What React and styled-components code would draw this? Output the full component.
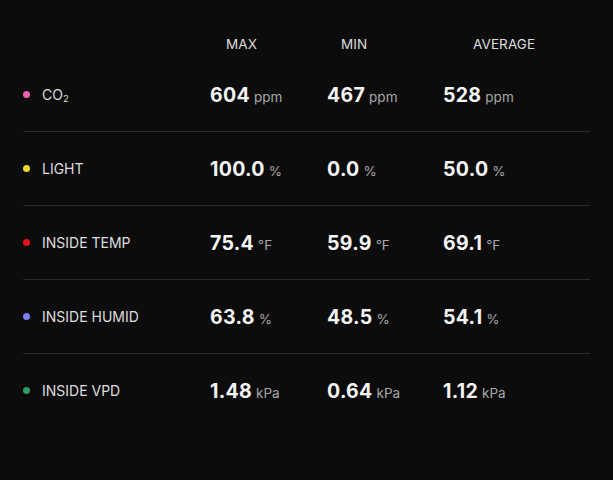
import React from "react";
import styled, { createGlobalStyle } from "styled-components";

const Global = createGlobalStyle`
  html, body { margin: 0; padding: 0; background: #0c0c0c; }
  body { font-family: Inter, "Noto Sans", "Liberation Sans", sans-serif; }
`;

const Page = styled.div`
  width: 613px;
  height: 480px;
  box-sizing: border-box;
  padding: 30px 23px 0 23px;
  background: #0c0c0c;
`;

const Grid = styled.div`
  display: grid;
  grid-template-columns: 187px 117px 116px 1fr;
`;

const HeaderCell = styled.div`
  height: 28px;
  display: flex;
  align-items: center;
  padding-left: ${(p) => p.$offset || 0}px;
  color: #dcdcdc;
  font-size: 13.5px;
  font-weight: 400;
  letter-spacing: 0.1px;
`;

const Row = styled.div`
  grid-column: 1 / -1;
  display: grid;
  grid-template-columns: subgrid;
  height: 73px;
  align-items: center;
  border-bottom: ${(p) => (p.$last ? "none" : "1px solid #2a2a2a")};
`;

const Label = styled.div`
  display: flex;
  align-items: center;
  gap: 12px;
  color: #dedede;
  font-size: 14px;
  font-weight: 400;
`;

const Dot = styled.span`
  width: 7px;
  height: 7px;
  border-radius: 50%;
  background: ${(p) => p.$color};
`;

const Value = styled.div`
  display: flex;
  align-items: baseline;
  gap: 4px;
`;

const Num = styled.span`
  color: #f4f4f4;
  font-size: 19.5px;
  font-weight: 700;
  letter-spacing: 0.3px;
`;

const Unit = styled.span`
  color: #a8a8a8;
  font-size: 13.5px;
  font-weight: 400;
`;

const Sub = styled.sub`
  font-size: 9.5px;
  vertical-align: -2px;
`;

const rows = [
  { label: <>CO<Sub>2</Sub></>, color: "#ee5fae", unit: "ppm", vals: ["604", "467", "528"] },
  { label: "LIGHT", color: "#e9d52b", unit: "%", vals: ["100.0", "0.0", "50.0"] },
  { label: "INSIDE TEMP", color: "#e5141b", unit: "°F", vals: ["75.4", "59.9", "69.1"] },
  { label: "INSIDE HUMID", color: "#7b7ff5", unit: "%", vals: ["63.8", "48.5", "54.1"] },
  { label: "INSIDE VPD", color: "#2f9a63", unit: "kPa", vals: ["1.48", "0.64", "1.12"] },
];

export default function App() {
  return (
    <Page>
      <Global />
      <Grid>
        <HeaderCell />
        <HeaderCell $offset={16}>MAX</HeaderCell>
        <HeaderCell $offset={14}>MIN</HeaderCell>
        <HeaderCell $offset={30}>AVERAGE</HeaderCell>
        {rows.map((r, i) => (
          <Row key={i} $last={i === rows.length - 1}>
            <Label>
              <Dot $color={r.color} />
              <span>{r.label}</span>
            </Label>
            {r.vals.map((v, j) => (
              <Value key={j}>
                <Num>{v}</Num>
                <Unit>{r.unit}</Unit>
              </Value>
            ))}
          </Row>
        ))}
      </Grid>
    </Page>
  );
}
